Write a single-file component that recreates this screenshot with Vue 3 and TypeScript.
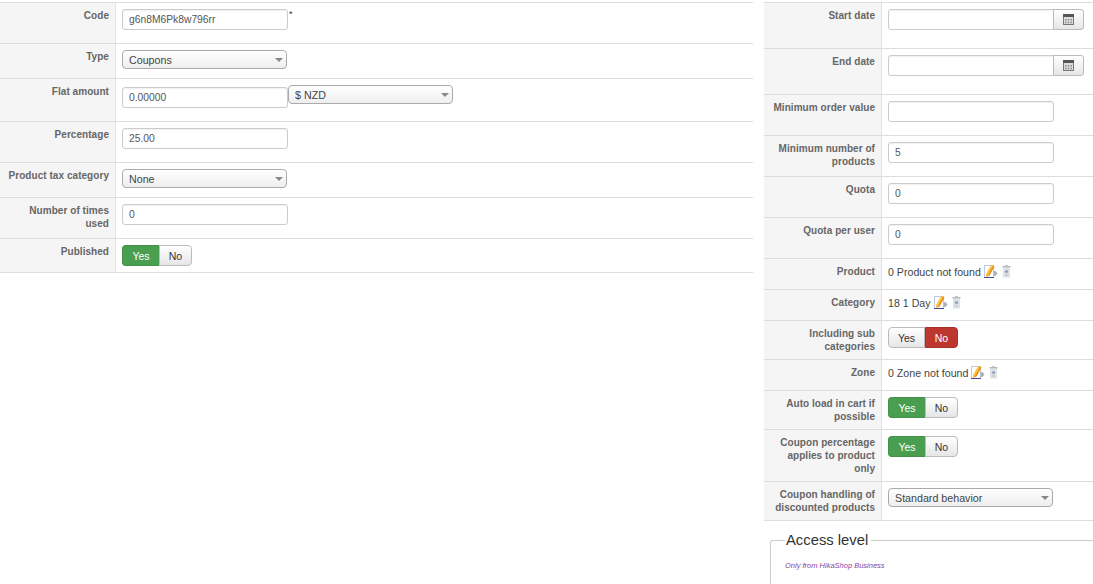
<script setup lang="ts">
interface Part { d: string; fill: string }
const editParts: Part[] = [
  { d: 'M9.500 6h2l2 2.500-2 2.500h-2z', fill: '#aab2ba' },
  { d: 'M7.500 0 10.500 1.500 5.500 10.500 2.500 12 2.500 8.500z', fill: '#f08a14' },
  { d: 'M7.500 0 9 .8 4 10 2.500 12 2.500 8.500z', fill: '#f9c93f' },
];
</script>

<template>
  <div class="page">
    <section class="col col-left">
      <div class="row">
        <div class="label">Code</div>
        <div class="value code-value"><input class="field gap-input" type="text" value="g6n8M6Pk8w796rr" /><span class="req">*</span></div>
      </div>
      <div class="row">
        <div class="label">Type</div>
        <div class="value"><div class="select gap-select"><select><option>Coupons</option></select><i class="caret"></i></div></div>
      </div>
      <div class="row">
        <div class="label">Flat amount</div>
        <div class="value inline">
          <input class="field gap-input shifted" type="text" value="0.00000" />
          <div class="select"><select><option>$ NZD</option></select><i class="caret"></i></div>
        </div>
      </div>
      <div class="row">
        <div class="label">Percentage</div>
        <div class="value"><input class="field gap-input" type="text" value="25.00" /></div>
      </div>
      <div class="row">
        <div class="label">Product tax category</div>
        <div class="value"><div class="select gap-select"><select><option>None</option></select><i class="caret"></i></div></div>
      </div>
      <div class="row">
        <div class="label">Number of times used</div>
        <div class="value"><input class="field gap-input" type="text" value="0" /></div>
      </div>
      <div class="row">
        <div class="label">Published</div>
        <div class="value"><div class="toggle"><button class="yes on-yes">Yes</button><button class="no">No</button></div></div>
      </div>
    </section>

    <section class="col col-right">
      <div class="row">
        <div class="label">Start date</div>
        <div class="value"><div class="date">
          <input class="field" type="text" />
          <button class="cal" aria-label="Calendar">
            <svg width="11" height="11" viewBox="0 0 11 11"><rect x="0.500" y="0.500" width="10" height="10" fill="#ddd" stroke="#777"/><rect x="0" y="0" width="11" height="3" fill="#555"/><path d="M2 5h1.500v1.500H2zM4.700 5h1.500v1.500H4.700zM7.400 5h1.500v1.500H7.400zM2 7.800h1.500v1.500H2zM4.700 7.800h1.500v1.500H4.700zM7.400 7.800h1.500v1.500H7.400z" fill="#888"/></svg>
          </button>
        </div></div>
      </div>
      <div class="row">
        <div class="label">End date</div>
        <div class="value"><div class="date">
          <input class="field" type="text" />
          <button class="cal" aria-label="Calendar">
            <svg width="11" height="11" viewBox="0 0 11 11"><rect x="0.500" y="0.500" width="10" height="10" fill="#ddd" stroke="#777"/><rect x="0" y="0" width="11" height="3" fill="#555"/><path d="M2 5h1.500v1.500H2zM4.700 5h1.500v1.500H4.700zM7.400 5h1.500v1.500H7.400zM2 7.800h1.500v1.500H2zM4.700 7.800h1.500v1.500H4.700zM7.400 7.800h1.500v1.500H7.400z" fill="#888"/></svg>
          </button>
        </div></div>
      </div>
      <div class="row">
        <div class="label">Minimum order value</div>
        <div class="value"><input class="field gap-input" type="text" /></div>
      </div>
      <div class="row">
        <div class="label">Minimum number of products</div>
        <div class="value"><input class="field gap-input" type="text" value="5" /></div>
      </div>
      <div class="row">
        <div class="label">Quota</div>
        <div class="value"><input class="field gap-input" type="text" value="0" /></div>
      </div>
      <div class="row">
        <div class="label">Quota per user</div>
        <div class="value"><input class="field gap-input" type="text" value="0" /></div>
      </div>
      <div class="row">
        <div class="label">Product</div>
        <div class="value"><div class="info"><span>0 Product not found</span>
          <svg class="ico-edit" width="14" height="14" viewBox="0 0 14 14"><rect x="0.500" y="0.500" width="9" height="12" fill="#fff" stroke="#c4c8dc"/><path v-for="p in editParts" :key="p.d" :d="p.d" :fill="p.fill"/><path d="M0 12.500h10" stroke="#3b4ca0"/></svg>
          <svg class="ico-trash" width="9" height="13" viewBox="0 0 9 13"><rect x="1" y="2.500" width="7" height="10" fill="#dfe2e4"/><rect x="0.500" y="1" width="8" height="1.500" fill="#b5b9bc"/><rect x="3" y="0" width="3" height="1" fill="#c8c8c8"/><circle cx="4.500" cy="6.500" r="1.600" fill="#8ea4bf"/><path d="M3.500 10h2" stroke="#a6aeb6"/></svg>
        </div></div>
      </div>
      <div class="row">
        <div class="label">Category</div>
        <div class="value"><div class="info"><span>18 1 Day</span>
          <svg class="ico-edit" width="14" height="14" viewBox="0 0 14 14"><rect x="0.500" y="0.500" width="9" height="12" fill="#fff" stroke="#c4c8dc"/><path v-for="p in editParts" :key="p.d" :d="p.d" :fill="p.fill"/><path d="M0 12.500h10" stroke="#3b4ca0"/></svg>
          <svg class="ico-trash" width="9" height="13" viewBox="0 0 9 13"><rect x="1" y="2.500" width="7" height="10" fill="#dfe2e4"/><rect x="0.500" y="1" width="8" height="1.500" fill="#b5b9bc"/><rect x="3" y="0" width="3" height="1" fill="#c8c8c8"/><circle cx="4.500" cy="6.500" r="1.600" fill="#8ea4bf"/><path d="M3.500 10h2" stroke="#a6aeb6"/></svg>
        </div></div>
      </div>
      <div class="row">
        <div class="label">Including sub categories</div>
        <div class="value"><div class="toggle"><button class="yes">Yes</button><button class="no on-no">No</button></div></div>
      </div>
      <div class="row">
        <div class="label">Zone</div>
        <div class="value"><div class="info"><span>0 Zone not found</span>
          <svg class="ico-edit" width="14" height="14" viewBox="0 0 14 14"><rect x="0.500" y="0.500" width="9" height="12" fill="#fff" stroke="#c4c8dc"/><path v-for="p in editParts" :key="p.d" :d="p.d" :fill="p.fill"/><path d="M0 12.500h10" stroke="#3b4ca0"/></svg>
          <svg class="ico-trash" width="9" height="13" viewBox="0 0 9 13"><rect x="1" y="2.500" width="7" height="10" fill="#dfe2e4"/><rect x="0.500" y="1" width="8" height="1.500" fill="#b5b9bc"/><rect x="3" y="0" width="3" height="1" fill="#c8c8c8"/><circle cx="4.500" cy="6.500" r="1.600" fill="#8ea4bf"/><path d="M3.500 10h2" stroke="#a6aeb6"/></svg>
        </div></div>
      </div>
      <div class="row">
        <div class="label">Auto load in cart if possible</div>
        <div class="value"><div class="toggle"><button class="yes on-yes">Yes</button><button class="no">No</button></div></div>
      </div>
      <div class="row">
        <div class="label">Coupon percentage applies to product only</div>
        <div class="value"><div class="toggle"><button class="yes on-yes">Yes</button><button class="no">No</button></div></div>
      </div>
      <div class="row">
        <div class="label">Coupon handling of discounted products</div>
        <div class="value"><div class="select"><select><option>Standard behavior</option></select><i class="caret"></i></div></div>
      </div>
      <fieldset class="access">
        <legend>Access level</legend>
        <em>Only from HikaShop Business</em>
      </fieldset>
    </section>
  </div>
</template>

<style>
html, body { margin: 0; background: #fff; overflow: hidden; }
</style>

<style scoped>
.page {
  display: flex;
  gap: 11px;
  height: 584px;
  overflow: hidden;
  padding-top: 2px;
  box-sizing: border-box;
  font-family: "Liberation Sans", Arial, sans-serif;
  font-size: 10.650px;
  color: #555;
}
.col { border-top: 1px solid #ddd; }
.col-left { width: 753px; align-self: flex-start; }
.col-right { flex: 1; min-width: 0; align-self: stretch; border-top: none; }
.col-right > .row:first-child { border-top: 1px solid #ddd; }

.row { display: flex; border-bottom: 1px solid #ddd; }
.label {
  flex: none;
  box-sizing: border-box;
  width: 116px;
  padding: 6px 6px 6px 4px;
  background: #f5f5f5;
  border-right: 1px solid #e3e3e3;
  font-size: 10px;
  font-weight: bold;
  letter-spacing: 0.05px;
  line-height: 13px;
  text-align: right;
  color: #666;
}
.col-right .label { width: 118px; }
.value { flex: 1; min-width: 0; padding: 6px 6px 4px; }
.inline, .code-value { display: flex; align-items: flex-start; }

.field {
  display: block;
  box-sizing: border-box;
  width: 166px;
  height: 21px;
  padding: 3px 6px;
  border: 1px solid #ccc;
  border-radius: 3px;
  box-shadow: inset 0 1px 1px rgba(0, 0, 0, 0.06);
  background: #fff;
  font: 10.300px "Liberation Sans", Arial, sans-serif;
  color: #555;
  outline: none;
}
.gap-input { margin-bottom: 9px; }
.shifted { margin-top: 2px; }
.req { font-size: 9px; line-height: 11px; color: #333; margin-left: 1px; }

.select { position: relative; width: 165px; height: 19px; }
.gap-select { margin-bottom: 5px; }
.select select {
  appearance: none;
  display: block;
  box-sizing: border-box;
  width: 100%;
  height: 100%;
  padding: 0 16px 0 6px;
  border: 1px solid #aaa;
  border-radius: 4px;
  background: linear-gradient(#fff, #eee);
  font: 10.700px "Liberation Sans", Arial, sans-serif;
  color: #444;
  outline: none;
}
.caret {
  position: absolute;
  right: 4px;
  top: 8px;
  border: 4px solid transparent;
  border-top-color: #888;
  border-bottom: 0;
}

.toggle { display: inline-flex; height: 21px; margin-bottom: 2px; vertical-align: top; }
.toggle button {
  box-sizing: border-box;
  height: 21px;
  padding: 0;
  border: 1px solid #bbb;
  background: linear-gradient(#fff, #e6e6e6);
  font: 10.500px "Liberation Sans", Arial, sans-serif;
  color: #333;
}
.yes { width: 37px; border-radius: 4px 0 0 4px; border-right: 0 !important; }
.no { width: 33px; border-radius: 0 4px 4px 0; }
.toggle .yes:not(.on-yes) { border-right: 1px solid #bbb !important; }
.toggle .on-yes { background: #4a9e4f; border-color: #43914a; color: #fff; }
.toggle .on-no { background: #bd362f; border-color: #a8302a; color: #fff; }

.date { display: flex; margin-bottom: 14px; }
.date .field { border-radius: 3px 0 0 3px; }
.cal {
  box-sizing: border-box;
  width: 31px;
  height: 21px;
  padding: 0;
  margin-left: -1px;
  border: 1px solid #bbb;
  border-radius: 0 3px 3px 0;
  background: linear-gradient(#fff, #e6e6e6);
  display: flex;
  align-items: center;
  justify-content: center;
}

.info { display: flex; align-items: flex-start; height: 20px; line-height: 14px; color: #444; }
.ico-edit { margin-left: 3px; }
.ico-trash { margin-left: 4px; }

.access {
  margin: 11px 0 0 6px;
  padding: 12px 14px 60px;
  border: 1px solid #ccc;
  border-right: 0;
  border-bottom: 0;
  border-radius: 3px 0 0 0;
  min-width: 0;
}
.access legend {
  margin-left: 0;
  padding: 0 3px 0 1px;
  font-size: 14.800px;
  line-height: 17px;
  color: #333;
}
.access em { font-size: 7.500px; color: #8a3f9e; display: block; }
</style>
